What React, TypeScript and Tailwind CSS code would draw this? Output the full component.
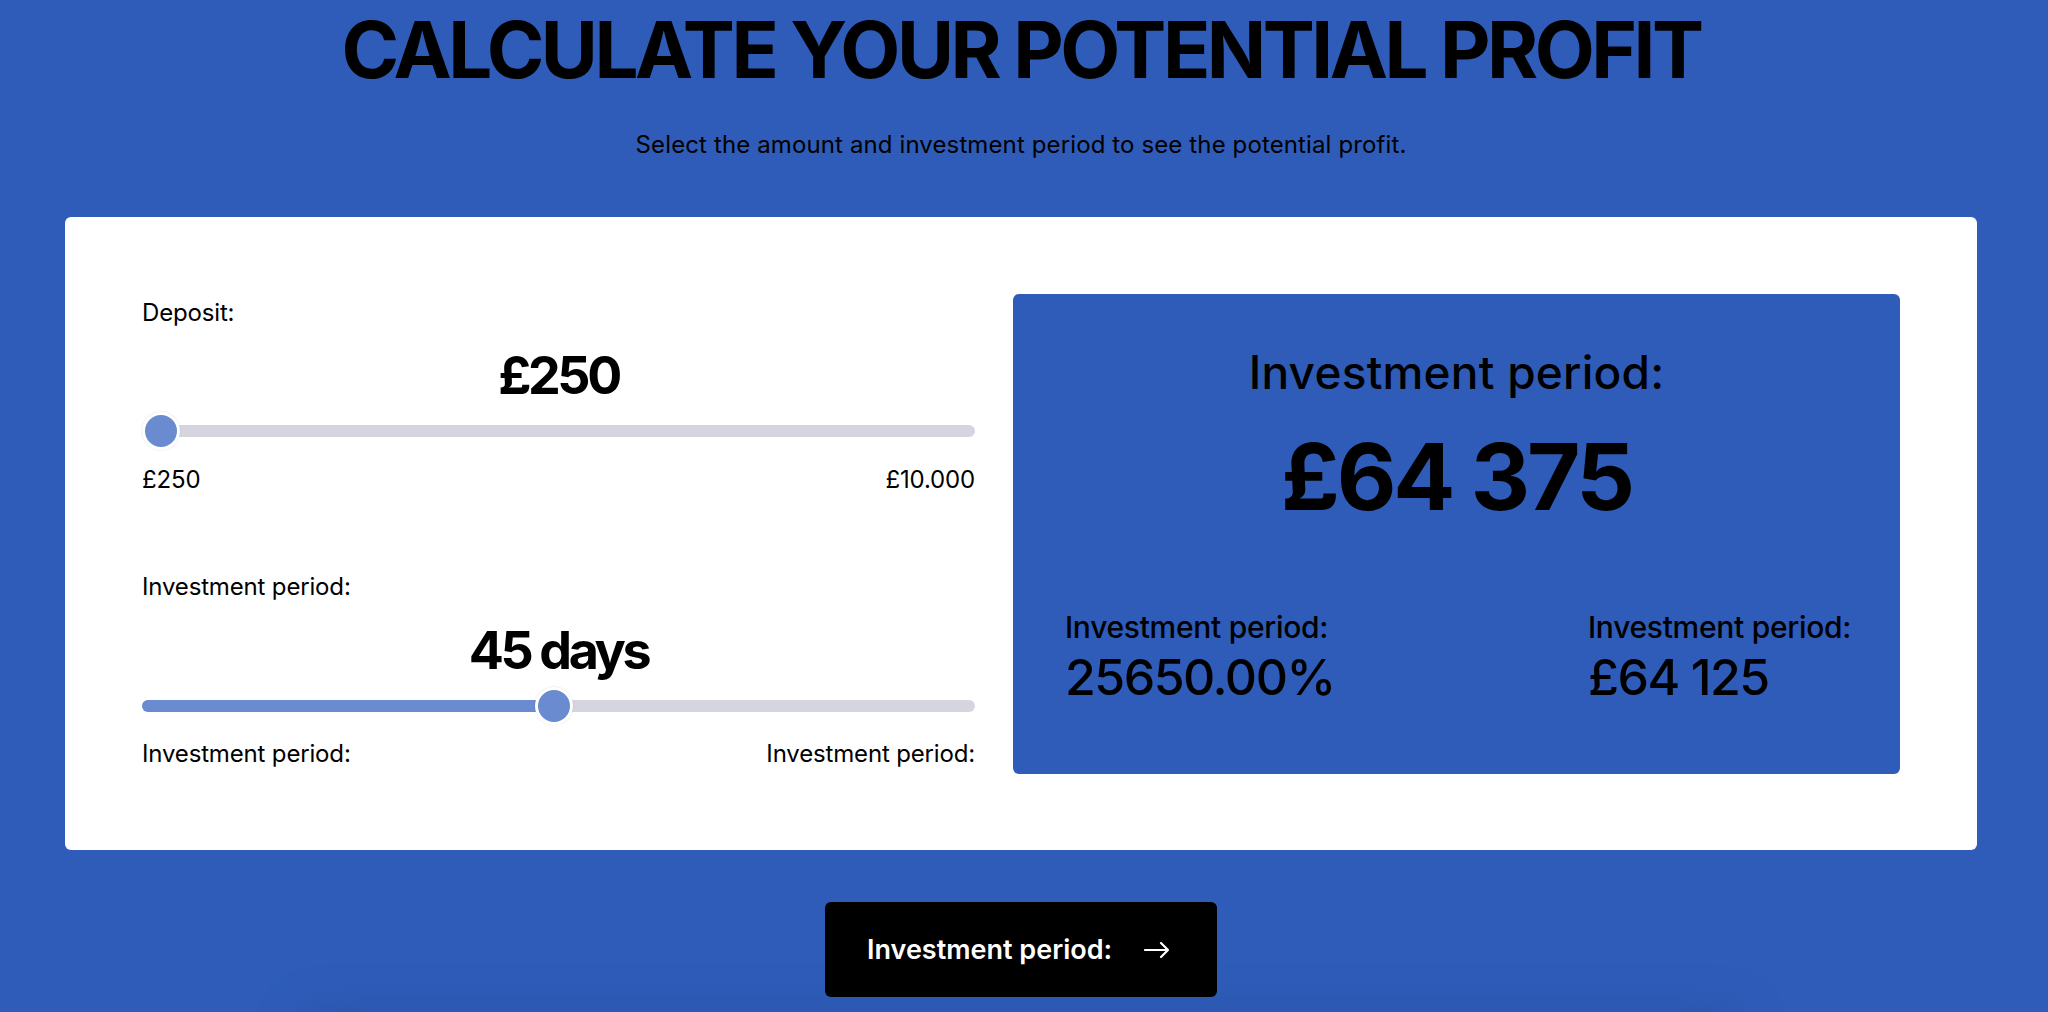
import React from "react";

const font = "font-['Inter','Liberation_Sans',sans-serif]";

type SliderProps = {
  pct: number;
  filled?: boolean;
};

const Slider = ({ pct, filled }: SliderProps) => {
  // thumb travels inside the track like a native range input
  const left = `calc(${pct} * (100% - 38px) + 19px)`;
  return (
    <div className="relative h-[38px] w-full">
      <div className="absolute left-0 right-0 top-[13px] h-[12px] rounded-full bg-[#d5d5df]" />
      {filled && (
        <div
          className="absolute left-0 top-[13px] h-[12px] rounded-full bg-[#6b8bd0]"
          style={{ width: left }}
        />
      )}
      <div
        className="absolute top-0 h-[38px] w-[38px] -translate-x-1/2 rounded-full border-[3px] border-white bg-[#6b8bd0] shadow-[0_0_2px_rgba(0,0,0,0.15)]"
        style={{ left }}
      />
    </div>
  );
};

const App = () => {
  return (
    <div className={`h-screen overflow-hidden bg-[#2e5cb8] text-black ${font}`}>
      <div className="flex w-[2042px] flex-col items-center">
        <h1 className="pt-[11px] text-[78px] font-bold leading-none tracking-[-0.045em]">
          CALCULATE YOUR POTENTIAL PROFIT
        </h1>
        <p className="mt-[44px] text-[24px] leading-none tracking-[0.005em]">
          Select the amount and investment period to see the potential profit.
        </p>

        <div className="mt-[60px] flex w-[1912px] gap-[38px] rounded-[6px] bg-white px-[77px] pb-[76px] pt-[77px]">
          <div className="flex w-[833px] flex-col tracking-[-0.01em]">
            <span className="mt-[7px] text-[24px] leading-none">Deposit:</span>
            <span className="mt-[25px] text-center text-[52px] font-bold leading-none tracking-[-0.065em]">
              £250
            </span>
            <div className="mt-[10px]">
              <Slider pct={0} />
            </div>
            <div className="mt-[18px] flex justify-between text-[24px] leading-none">
              <span>£250</span>
              <span>£10.000</span>
            </div>

            <span className="mt-[83px] text-[24px] leading-none">Investment period:</span>
            <span className="mt-[26px] text-center text-[52px] font-bold leading-none tracking-[-0.065em]">
              45 days
            </span>
            <div className="mt-[10px]">
              <Slider pct={44 / 89} filled />
            </div>
            <div className="mt-[17px] flex justify-between text-[24px] leading-none">
              <span>Investment period:</span>
              <span>Investment period:</span>
            </div>
          </div>

          <div className="flex h-[480px] w-[887px] flex-col rounded-[6px] bg-[#2e5cb8] px-[52px] pt-[55px]">
            <span className="text-center text-[46px] font-medium leading-none tracking-[0.005em]">
              Investment period:
            </span>
            <span className="mt-[36px] text-center text-[92px] font-bold leading-none tracking-[-0.035em]">
              £64 375
            </span>
            <div className="mt-[89px] flex justify-between">
              <div className="flex flex-col">
                <span className="text-[30px] font-medium leading-none tracking-[-0.01em]">
                  Investment period:
                </span>
                <span className="mt-[10px] text-[50px] font-medium leading-none tracking-[-0.03em]">
                  25650.00%
                </span>
              </div>
              <div className="flex w-[260px] flex-col">
                <span className="whitespace-nowrap text-[30px] font-medium leading-none tracking-[-0.01em]">
                  Investment period:
                </span>
                <span className="mt-[10px] text-[50px] font-medium leading-none tracking-[-0.03em]">
                  £64 125
                </span>
              </div>
            </div>
          </div>
        </div>

        <button className="relative z-10 mt-[52px] flex h-[95px] w-[392px] items-center rounded-[6px] bg-black pl-[42px] text-white">
          <span className="text-[27px] font-semibold leading-none">Investment period:</span>
          <svg
            className="ml-[32px]"
            width="26"
            height="16"
            viewBox="0 0 26 16"
            fill="none"
            stroke="currentColor"
            strokeWidth="2.2"
            strokeLinecap="round"
            strokeLinejoin="round"
          >
            <path d="M1 8h23M17 1l7 7-7 7" />
          </svg>
        </button>

        <div className="mt-[10px] h-[60px] w-[1450px] rounded-[40px] bg-[#2955ad] blur-[18px]" />
      </div>
    </div>
  );
};

export default App;
